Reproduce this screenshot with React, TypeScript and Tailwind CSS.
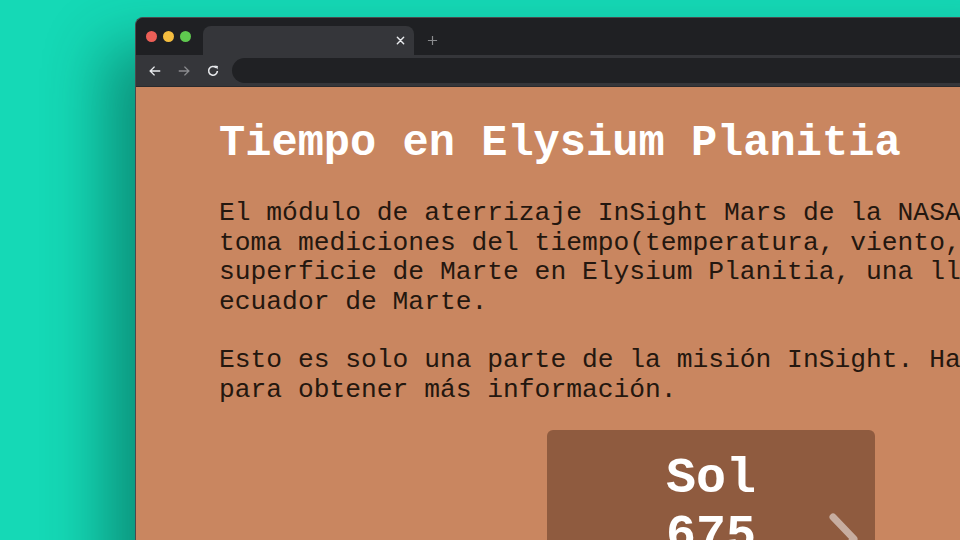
import React from "react";

export default function App() {
  const mono = { fontFamily: '"Liberation Mono", "DejaVu Sans Mono", monospace' };
  return (
    <div className="w-[960px] h-[540px] overflow-hidden bg-[#15d9b6] pl-[135px] pt-[17px]">
      <div className="relative w-[900px] h-[600px] flex flex-col rounded-tl-[8px] border-l border-t border-[#4a4a4d] bg-[#1f2023] shadow-[-30px_30px_60px_rgba(0,60,50,0.45)]">
        {/* title bar */}
        <div className="h-[37px] flex items-end bg-[#1f2023] rounded-tl-[8px]">
          <div className="h-full flex items-center gap-[6px] pl-[10px] pr-[11px]">
            <span className="w-[11px] h-[11px] rounded-full bg-[#ec5f57]" />
            <span className="w-[11px] h-[11px] rounded-full bg-[#f4bd3f]" />
            <span className="w-[11px] h-[11px] rounded-full bg-[#5fc84f]" />
          </div>
          <div className="ml-[1px] w-[211px] h-[29px] bg-[#35363a] rounded-t-[8px] flex items-center justify-end pr-[9px]">
            <svg width="9" height="9" viewBox="0 0 10 10">
              <path d="M1.5 1.5 L8.5 8.5 M8.5 1.5 L1.5 8.5" stroke="#e8eaed" strokeWidth="1.6" strokeLinecap="round" />
            </svg>
          </div>
          <div className="h-[29px] flex items-center pl-[13px]">
            <svg width="11" height="11" viewBox="0 0 12 12">
              <path d="M6 1 V11 M1 6 H11" stroke="#8a8b8e" strokeWidth="1.3" />
            </svg>
          </div>
        </div>
        {/* toolbar */}
        <div className="h-[32px] flex items-center bg-[#35363a] border-b border-[#2a2a2d]">
          <div className="flex items-center gap-[15px] pl-[12px] pr-[10px]">
            <svg width="14" height="14" viewBox="0 0 16 16">
              <path d="M14 8 H2.5 M7.5 3 L2.5 8 L7.5 13" stroke="#e8eaed" strokeWidth="1.6" fill="none" />
            </svg>
            <svg width="14" height="14" viewBox="0 0 16 16">
              <path d="M2 8 H13.5 M8.5 3 L13.5 8 L8.5 13" stroke="#8a8b8e" strokeWidth="1.6" fill="none" />
            </svg>
            <svg width="14" height="14" viewBox="0 0 16 16">
              <path d="M13 8 A5 5 0 1 1 11.5 4.3" stroke="#e8eaed" strokeWidth="1.8" fill="none" />
              <path d="M9.5 1.8 L13.6 2.2 L13.2 6.3 Z" fill="#e8eaed" />
            </svg>
          </div>
          <div className="ml-[2px] flex-1 h-[25px] rounded-l-full bg-[#202124]" />
        </div>
        {/* content */}
        <div className="flex-1 bg-[#c98660] pl-[83px] pt-[29px] text-[#24170f]" style={mono}>
          <h1 className="text-[43.7px] leading-[56px] font-bold text-white whitespace-nowrap">
            Tiempo en Elysium Planitia
          </h1>
          <div className="mt-[27px] w-[1000px] text-[26.3px] leading-[29.5px] whitespace-nowrap">
            <p>El módulo de aterrizaje InSight Mars de la NASA</p>
            <p>toma mediciones del tiempo(temperatura, viento,</p>
            <p>superficie de Marte en Elysium Planitia, una ll</p>
            <p>ecuador de Marte.</p>
            <p className="mt-[29px]">Esto es solo una parte de la misión InSight. Ha</p>
            <p>para obtener más información.</p>
          </div>
          <div className="relative mt-[25px] ml-[328px] w-[328px] h-[160px] rounded-[6px] bg-[#8f5b3f] pt-[20px] text-center text-white font-bold text-[50px] leading-[57px]">
            <div>Sol</div>
            <div>675</div>
            <svg className="absolute left-[280px] top-[81px]" width="34" height="56" viewBox="0 0 34 56">
              <path d="M6 6 L27 28 L6 50" stroke="#c7ada0" strokeWidth="7" strokeLinecap="round" strokeLinejoin="round" fill="none" />
            </svg>
          </div>
        </div>
      </div>
    </div>
  );
}
